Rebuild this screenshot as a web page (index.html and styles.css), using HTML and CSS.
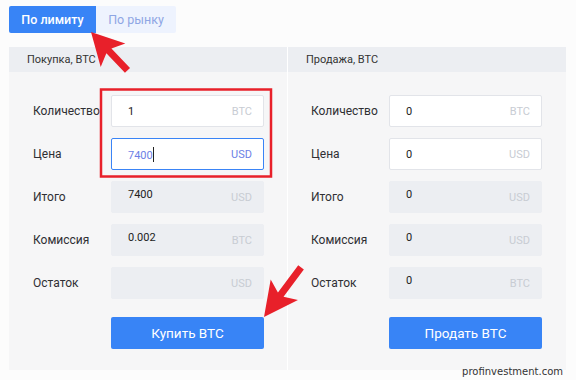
FILE: index.html
```html
<!DOCTYPE html>
<html lang="ru">
<head>
    <meta charset="UTF-8">
    <title>Торговля BTC</title>
<link rel="stylesheet" href="styles.css">
</head>
<body>
  <div class="page">
    <div class="tabs">
        <div class="tab active">По лимиту</div>
        <div class="tab">По рынку</div>
    </div>

    <div class="panel">
        <div class="side">
            <div class="side-head">Покупка, BTC</div>
            <div class="side-body">
                <label>Количество</label>
                <div class="field"><span class="val">1</span><span class="unit">BTC</span></div>
                <label>Цена</label>
                <div class="field focus"><span class="val">7400<i class="caret"></i></span><span class="unit">USD</span></div>
                <label>Итого</label>
                <div class="field ro"><span class="val">7400</span><span class="unit">USD</span></div>
                <label>Комиссия</label>
                <div class="field ro"><span class="val">0.002</span><span class="unit">BTC</span></div>
                <label>Остаток</label>
                <div class="field ro"><span class="val"></span><span class="unit">USD</span></div>
                <button class="btn">Купить BTC</button>
            </div>
        </div>
        <div class="side">
            <div class="side-head">Продажа, BTC</div>
            <div class="side-body">
                <label>Количество</label>
                <div class="field"><span class="val">0</span><span class="unit">BTC</span></div>
                <label>Цена</label>
                <div class="field"><span class="val">0</span><span class="unit">USD</span></div>
                <label>Итого</label>
                <div class="field ro"><span class="val">0</span><span class="unit">USD</span></div>
                <label>Комиссия</label>
                <div class="field ro"><span class="val">0</span><span class="unit">USD</span></div>
                <label>Остаток</label>
                <div class="field ro"><span class="val">0</span><span class="unit">BTC</span></div>
                <button class="btn">Продать BTC</button>
            </div>
        </div>
    </div>

    <div class="watermark">profinvestment.com</div>

    <svg class="marks" width="576" height="380" viewBox="0 0 576 380">
        <rect x="101" y="89.5" width="170" height="87" fill="none" stroke="#e8202a" stroke-width="2.5"/>
        <g transform="translate(91 32) rotate(226.5)" fill="#e8202a">
            <polygon points="0,0 -32,-17 -26,-3.5 -53,-3.5 -53,3.5 -26,3.5 -32,17"/>
        </g>
        <g transform="translate(264 317) rotate(126.7)" fill="#e8202a">
            <polygon points="0,0 -34,-17 -28,-3.5 -62,-3.5 -62,3.5 -28,3.5 -34,17"/>
        </g>
    </svg>
  </div>
</body>
</html>
```

FILE: styles.css
```css
body {
    margin: 0;
    background-color: #fcfcfc;
    font-family: Roboto, "Liberation Sans", Arial, sans-serif;
    color: #2f2f33;
}

.page {
    position: relative;
    width: 576px;
    height: 380px;
    padding: 6px 9px 0 9px;
    box-sizing: border-box;
}

.tabs {
    display: flex;
    height: 27px;
}

.tab {
    display: flex;
    align-items: center;
    justify-content: center;
    width: 80px;
    font-size: 12.5px;
    background-color: #eef3fe;
    color: #8ea6e4;
    border-radius: 0 2px 2px 0;
}

.tab.active {
    width: 87px;
    background-color: #3884f6;
    color: #ffffff;
    font-weight: 500;
    border-radius: 2px 0 0 2px;
}

.panel {
    display: grid;
    grid-template-columns: 278px 278px;
    column-gap: 1px;
    margin-top: 14px;
    width: 557px;
    background-color: #ffffff;
}

.side {
    background-color: #f6f6f7;
    height: 323px;
}

.side-head {
    height: 25px;
    line-height: 25px;
    padding-left: 18px;
    background-color: #eceef2;
    font-size: 11px;
    color: #333;
}

.side-body {
    display: grid;
    grid-template-columns: 78px 153px;
    row-gap: 11px;
    align-items: center;
    padding: 23px 0 0 24px;
}

.side:last-child .side-body {
    padding-left: 23px;
}

label {
    font-size: 12px;
    color: #2f2f33;
}

.field {
    display: flex;
    align-items: center;
    justify-content: space-between;
    height: 32px;
    box-sizing: border-box;
    padding: 0 11px 0 16px;
    background-color: #ffffff;
    border: 1px solid #e2e4e9;
    border-radius: 2px;
    font-size: 11px;
}

.field .val {
    color: #222;
}

.field .unit {
    font-size: 11px;
    color: #c8ccd3;
}

.field.focus {
    border-color: #3a84f6;
}

.field.focus .val,
.field.focus .unit {
    color: #6c7fe6;
}

.caret {
    display: inline-block;
    width: 1px;
    height: 15px;
    background-color: #222;
    vertical-align: -3px;
}

.field.ro {
    background-color: #eceef2;
    border-color: #eceef2;
}

.field.ro .val {
    margin-top: -5px;
}

.btn {
    grid-column: 2;
    height: 32px;
    margin-top: 7px;
    border: none;
    border-radius: 2px;
    background-color: #3884f6;
    color: #ffffff;
    font-family: inherit;
    font-size: 13.5px;
    cursor: pointer;
}

.watermark {
    position: absolute;
    right: 13px;
    bottom: 3px;
    font-family: "DejaVu Sans", Verdana, sans-serif;
    font-size: 10px;
    color: #333;
}

.marks {
    position: absolute;
    left: 0;
    top: 0;
    pointer-events: none;
}
```
